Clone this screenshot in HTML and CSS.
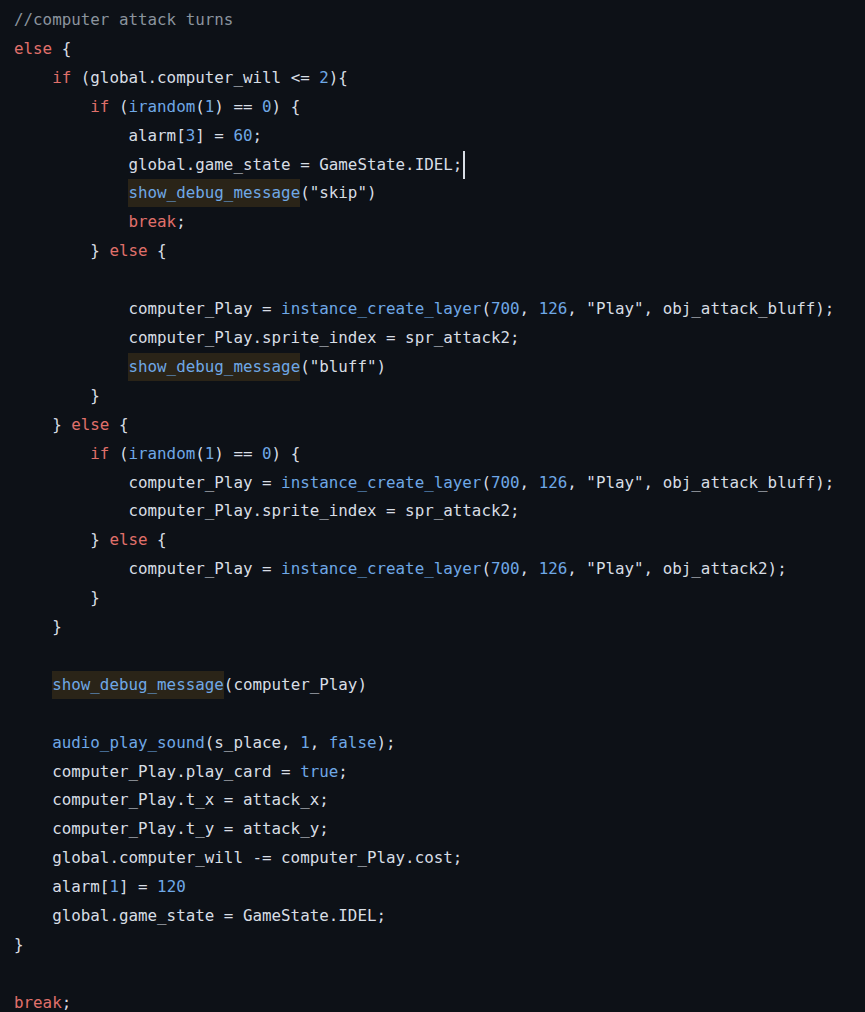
FILE: index.html
```html
<!DOCTYPE html>
<html>
<head>
<meta charset="utf-8">
<link rel="stylesheet" href="styles.css">
</head>
<body>
<pre class="code"><div class="ln"><span class="c">//computer attack turns</span></div><div class="ln"><span class="k">else</span> {</div><div class="ln">    <span class="k">if</span> (global.computer_will &lt;= <span class="n">2</span>){</div><div class="ln">        <span class="k">if</span> (<span class="f">irandom</span>(<span class="n">1</span>) == <span class="n">0</span>) {</div><div class="ln">            alarm[<span class="n">3</span>] = <span class="n">60</span>;</div><div class="ln">            global.game_state = GameState.IDEL;<span class="caret"></span></div><div class="ln">            <span class="f hl">show_debug_message</span>("skip")</div><div class="ln">            <span class="k">break</span>;</div><div class="ln">        } <span class="k">else</span> {</div><div class="ln"> </div><div class="ln">            computer_Play = <span class="f">instance_create_layer</span>(<span class="n">700</span>, <span class="n">126</span>, "Play", obj_attack_bluff);</div><div class="ln">            computer_Play.sprite_index = spr_attack2;</div><div class="ln">            <span class="f hl">show_debug_message</span>("bluff")</div><div class="ln">        }</div><div class="ln">    } <span class="k">else</span> {</div><div class="ln">        <span class="k">if</span> (<span class="f">irandom</span>(<span class="n">1</span>) == <span class="n">0</span>) {</div><div class="ln">            computer_Play = <span class="f">instance_create_layer</span>(<span class="n">700</span>, <span class="n">126</span>, "Play", obj_attack_bluff);</div><div class="ln">            computer_Play.sprite_index = spr_attack2;</div><div class="ln">        } <span class="k">else</span> {</div><div class="ln">            computer_Play = <span class="f">instance_create_layer</span>(<span class="n">700</span>, <span class="n">126</span>, "Play", obj_attack2);</div><div class="ln">        }</div><div class="ln">    }</div><div class="ln"> </div><div class="ln">    <span class="f hl">show_debug_message</span>(computer_Play)</div><div class="ln"> </div><div class="ln">    <span class="f">audio_play_sound</span>(s_place, <span class="n">1</span>, <span class="n">false</span>);</div><div class="ln">    computer_Play.play_card = <span class="n">true</span>;</div><div class="ln">    computer_Play.t_x = attack_x;</div><div class="ln">    computer_Play.t_y = attack_y;</div><div class="ln">    global.computer_will -= computer_Play.cost;</div><div class="ln">    alarm[<span class="n">1</span>] = <span class="n">120</span></div><div class="ln">    global.game_state = GameState.IDEL;</div><div class="ln">}</div><div class="ln"> </div><div class="ln"><span class="k">break</span>;</div></pre>
</body>
</html>
```
FILE: styles.css
```css
html, body {
  margin: 0;
  padding: 0;
  background: #0d1117;
  height: 100%;
  overflow: hidden;
}
.code {
  margin: 0;
  padding: 6px 0 0 14px;
  font-family: "DejaVu Sans Mono", "Liberation Mono", monospace;
  font-size: 15.85px;
  line-height: 28.92px;
  color: #d8dee5;
  white-space: pre;
}
.ln {
  height: 28.92px;
}
.c { color: #8b949e; }
.k { color: #e0706b; }
.f { color: #6fa8e6; }
.n { color: #6fa8e6; }
.hl {
  background: #2a2418;
  display: inline-block;
  line-height: 28px;
}
.caret {
  display: inline-block;
  width: 2px;
  height: 28px;
  background: #d8dee5;
  vertical-align: middle;
  margin-left: 1px;
}
```
